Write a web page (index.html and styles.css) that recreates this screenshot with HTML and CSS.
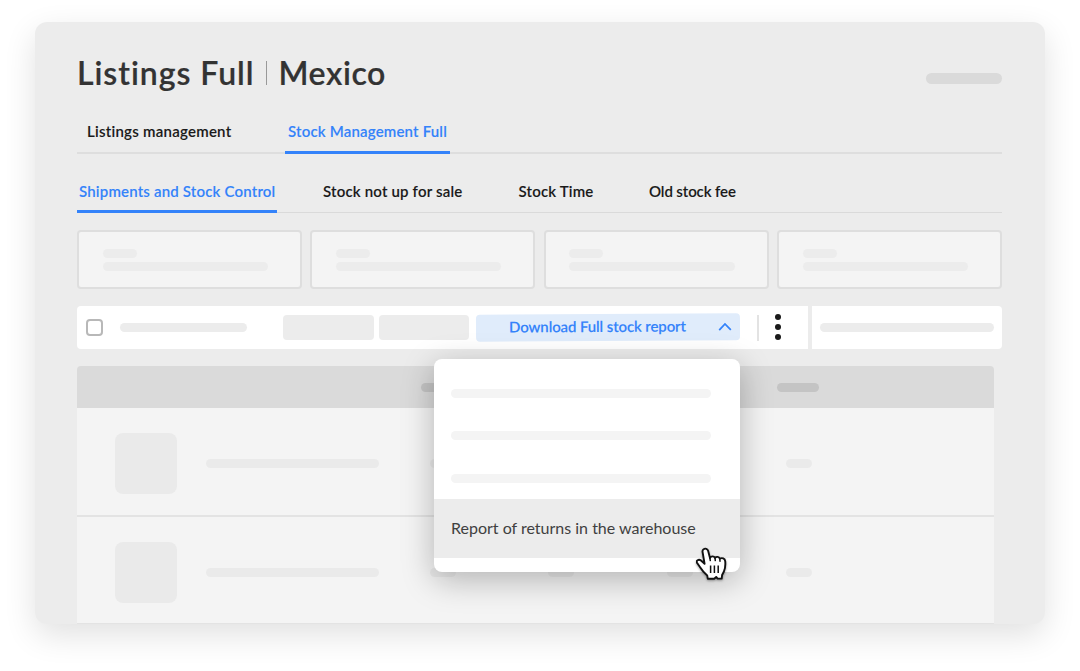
FILE: index.html
```
<!DOCTYPE html>
<html lang="en">
<head>
    <meta charset="UTF-8" />
    <meta name="viewport" content="width=device-width, initial-scale=1.0"/>
    <title>Listings Full | Mexico</title>
    <link rel="stylesheet" href="styles.css">
</head>
<body>
    <main class="panel">
        <header class="header">
            <h1><span class="title-main">Listings Full</span><span class="divider"></span><span class="title-country">Mexico</span></h1>
            <span class="bar header-bar"></span>
        </header>

        <nav class="tabs main-tabs">
            <a class="tab tab-listings">Listings management</a>
            <a class="tab tab-stock active">Stock Management Full</a>
        </nav>

        <nav class="tabs sub-tabs">
            <a class="tab tab-shipments active">Shipments and Stock Control</a>
            <a class="tab tab-not-sale">Stock not up for sale</a>
            <a class="tab tab-time">Stock Time</a>
            <a class="tab tab-fee">Old stock fee</a>
        </nav>

        <section class="cards">
            <div class="card"><span class="bar short"></span><span class="bar long"></span></div>
            <div class="card"><span class="bar short"></span><span class="bar long"></span></div>
            <div class="card"><span class="bar short"></span><span class="bar long"></span></div>
            <div class="card"><span class="bar short"></span><span class="bar long"></span></div>
        </section>

        <section class="toolbar">
            <div class="actions">
                <span class="checkbox"></span>
                <span class="bar action-bar"></span>
                <span class="ghost-btn"></span>
                <span class="ghost-btn"></span>
                <div class="download">
                    <button class="download-btn">
                        <span>Download Full stock report</span>
                        <svg width="14" height="9" viewBox="0 0 14 9"><path d="M1.2 7.6 L7 1.6 L12.8 7.6" fill="none" stroke="#3483fa" stroke-width="1.8"/></svg>
                    </button>

                    <!-- Dropdown menu -->
                    <div class="menu">
                        <div class="menu-item"><span class="bar"></span></div>
                        <div class="menu-item"><span class="bar"></span></div>
                        <div class="menu-item"><span class="bar"></span></div>
                        <div class="menu-item selected">Report of returns in the warehouse</div>
                        <svg class="cursor" width="32" height="36" viewBox="0 0 32 36">
                            <path d="M7.6 3.2 C9.3 2 11.5 2.8 12.1 4.8 L14 12 C15 9.9 18 9.9 19 11.9 C20.4 10.3 23 10.6 23.8 12.7 C26 11.4 28.9 12.6 29.2 15.2 C29.6 19.2 29.3 22.4 27.8 25.8 L26.1 29 L25.7 32.6 L21.6 32.6 L20.2 31 L18.2 32.8 L11.8 32.8 L11.2 29.4 C8.6 27.2 6.1 24.4 4.1 21.2 L1 16.8 C-0.1 14.7 2.6 12.8 5 14.5 L8.6 17.8 L6.6 6.2 C6.3 4.7 6.7 3.8 7.6 3.2 Z" fill="#fff" stroke="#111" stroke-width="1.9" stroke-linejoin="round"/>
                            <path d="M13.9 12 L14.3 14.6 M19 11.9 L19.3 14.6 M23.8 12.7 L24 15.2" fill="none" stroke="#111" stroke-width="1.5" stroke-linecap="round"/>
                            <path d="M14.6 19.4 V27 M18.4 19.4 V27 M22.2 19.4 V27" fill="none" stroke="#111" stroke-width="1.5"/>
                        </svg>
                    </div>
                </div>
                <span class="separator"></span>
                <span class="dots"><i></i><i></i><i></i></span>
            </div>
            <div class="search"><span class="bar"></span></div>
        </section>

        <section class="table">
            <div class="row table-head">
                <span></span><span></span>
                <span class="bar"></span><span class="bar"></span><span class="bar"></span><span class="bar"></span>
            </div>
            <div class="row">
                <span class="thumb"></span><span class="bar name"></span>
                <span class="bar"></span><span class="bar"></span><span class="bar"></span><span class="bar"></span>
            </div>
            <div class="row">
                <span class="thumb"></span><span class="bar name"></span>
                <span class="bar"></span><span class="bar"></span><span class="bar"></span><span class="bar"></span>
            </div>
        </section>
    </main>
</body>
</html>
```
FILE: styles.css
```
* {
    margin: 0;
    padding: 0;
    box-sizing: border-box;
}

body {
    font-family: 'Lato', 'Open Sans', sans-serif;
    min-height: 100vh;
    padding: 22px 35px 0;
    background: #fff;
    color: #1a1a1a;
    overflow: hidden;
}

.panel {
    width: 1010px;
    height: 602px;
    padding: 0 43px 0 42px;
    background: #ececec;
    border-radius: 12px;
    box-shadow: 0 11px 32px rgba(0, 0, 0, 0.12);
}

.bar {
    display: block;
    height: 9px;
    border-radius: 5px;
    background: #ececec;
}

/* Header */
.header {
    display: flex;
    justify-content: space-between;
    height: 88px;
}

h1 {
    display: flex;
    align-items: center;
    height: 101px;
    color: #333;
    font-size: 32px;
    font-weight: 600;
    white-space: nowrap;
    -webkit-text-stroke: 0.2px;
}

.title-main {
    width: 188.5px;
    letter-spacing: 0.95px;
}

.title-country {
    letter-spacing: 0.6px;
}

.divider {
    width: 1px;
    height: 24px;
    margin-right: 12px;
    background: #999;
}

.header-bar {
    width: 76px;
    height: 11px;
    margin-top: 50.5px;
    border-radius: 6px;
    background: #dadada;
}

/* Tabs */
.tabs {
    display: flex;
    font-size: 15px;
    font-weight: 600;
    letter-spacing: 0.18px;
    white-space: nowrap;
    -webkit-text-stroke: 0.1px;
}

.main-tabs {
    height: 44px;
    padding-left: 10px;
    border-bottom: 2px solid #dedede;
}

.sub-tabs {
    height: 59px;
    padding-top: 15px;
    border-bottom: 1px solid #dadada;
}

.tab {
    height: 44px;
    line-height: 44px;
}

.tab.active {
    color: #3483fa;
    border-bottom: 3px solid #3483fa;
    border-radius: 2px 2px 0 0;
}

.tab-listings {
    width: 198px;
    letter-spacing: 0.25px;
}

.tab-stock {
    width: 165px;
    padding-left: 3px;
}

.main-tabs .tab {
    line-height: 43px;
}

.tab-shipments {
    width: 200px;
    margin-right: 46px;
    padding-left: 2px;
}

.tab-not-sale {
    width: 195.5px;
}

.tab-time {
    width: 130.5px;
}

.tab-fee {
    letter-spacing: -0.1px;
}

/* Cards */
.cards {
    display: grid;
    grid-template-columns: repeat(4, 1fr);
    gap: 8.6px;
    margin-top: 17px;
}

.card {
    height: 59px;
    padding: 17px 0 0 23.5px;
    background: #f4f4f4;
    border: 2px solid #dedede;
    border-radius: 4px;
}

.card .short {
    width: 34px;
    margin-bottom: 4px;
}

.card .long {
    width: 165.5px;
}

/* Toolbar */
.toolbar {
    display: flex;
    gap: 4px;
    height: 43px;
    margin-top: 17px;
}

.actions {
    display: flex;
    align-items: center;
    width: 730.5px;
    padding-left: 9px;
    background: #fff;
    border-radius: 4px 0 0 4px;
}

.checkbox {
    width: 17px;
    height: 17px;
    border: 2px solid #b8b8b8;
    border-radius: 4px;
}

.action-bar {
    width: 127px;
    margin: 0 36px 0 17px;
}

.ghost-btn {
    width: 90.5px;
    height: 25px;
    margin-right: 5px;
    background: #ececec;
    border-radius: 4px;
}

.download {
    position: relative;
    width: 264px;
    margin-left: 2px;
}

.download-btn {
    display: flex;
    align-items: center;
    justify-content: space-between;
    width: 100%;
    height: 27px;
    padding: 0 8px 0 33px;
    background: #e0ecfb;
    border: none;
    border-radius: 4px;
    color: #3483fa;
    font-family: inherit;
    font-size: 15px;
    font-weight: 600;
    letter-spacing: -0.12px;
    white-space: nowrap;
    -webkit-text-stroke: 0.1px;
    transform: rotate(-0.3deg);
}

.download-btn span {
    padding-bottom: 3px;
}

.separator {
    width: 2px;
    height: 26px;
    margin: 0 16px 0 17px;
    background: #e3e3e3;
}

.dots {
    display: grid;
    gap: 4.2px;
    margin-bottom: 1px;
}

.dots i {
    width: 6px;
    height: 6px;
    border-radius: 50%;
    background: #1a1a1a;
}

.search {
    flex: 1;
    padding: 17px 8px 0;
    background: #fff;
    border-radius: 0 4px 4px 0;
}

/* Menu */
.menu {
    position: absolute;
    top: 45px;
    right: 0;
    z-index: 10;
    width: 306px;
    height: 213px;
    padding-top: 13px;
    background: #fff;
    border-radius: 8px;
    box-shadow: 0 8px 32px rgba(0, 0, 0, 0.27);
}

.menu-item {
    height: 42.3px;
    padding: 17px 29px 0 17px;
}

.menu-item .bar {
    background: #f4f4f4;
}

.menu-item.selected {
    height: 59px;
    padding: 0 17px;
    background: #ececec;
    color: #404040;
    font-size: 16px;
    line-height: 57px;
    white-space: nowrap;
}

.cursor {
    position: absolute;
    top: 186.5px;
    left: 261.5px;
    filter: drop-shadow(0 1px 1px rgba(0, 0, 0, 0.35));
}

/* Table */
.table {
    width: 917px;
    margin-top: 17px;
}

.row {
    display: grid;
    grid-template-columns: 91px 223.5px repeat(4, 118.8px);
    align-items: center;
    height: 108.5px;
    padding-left: 38px;
    background: #f4f4f4;
    border-bottom: 2px solid #e3e3e3;
}

.row .bar {
    width: 26px;
    margin-top: 5px;
    background: #eaeaea;
}

.row .name {
    width: 172.5px;
}

.row:last-child {
    height: 107px;
    border-bottom-width: 1px;
}

.thumb {
    width: 62px;
    height: 61px;
    margin-top: 5px;
    border-radius: 8px;
    background: #eaeaea;
}

.row.table-head {
    height: 42px;
    padding-left: 29px;
    border: none;
    border-radius: 4px 4px 0 0;
    background: #dadada;
}

.table-head .bar {
    width: 42px;
    margin-top: 0;
    background: #c4c4c4;
}
```
